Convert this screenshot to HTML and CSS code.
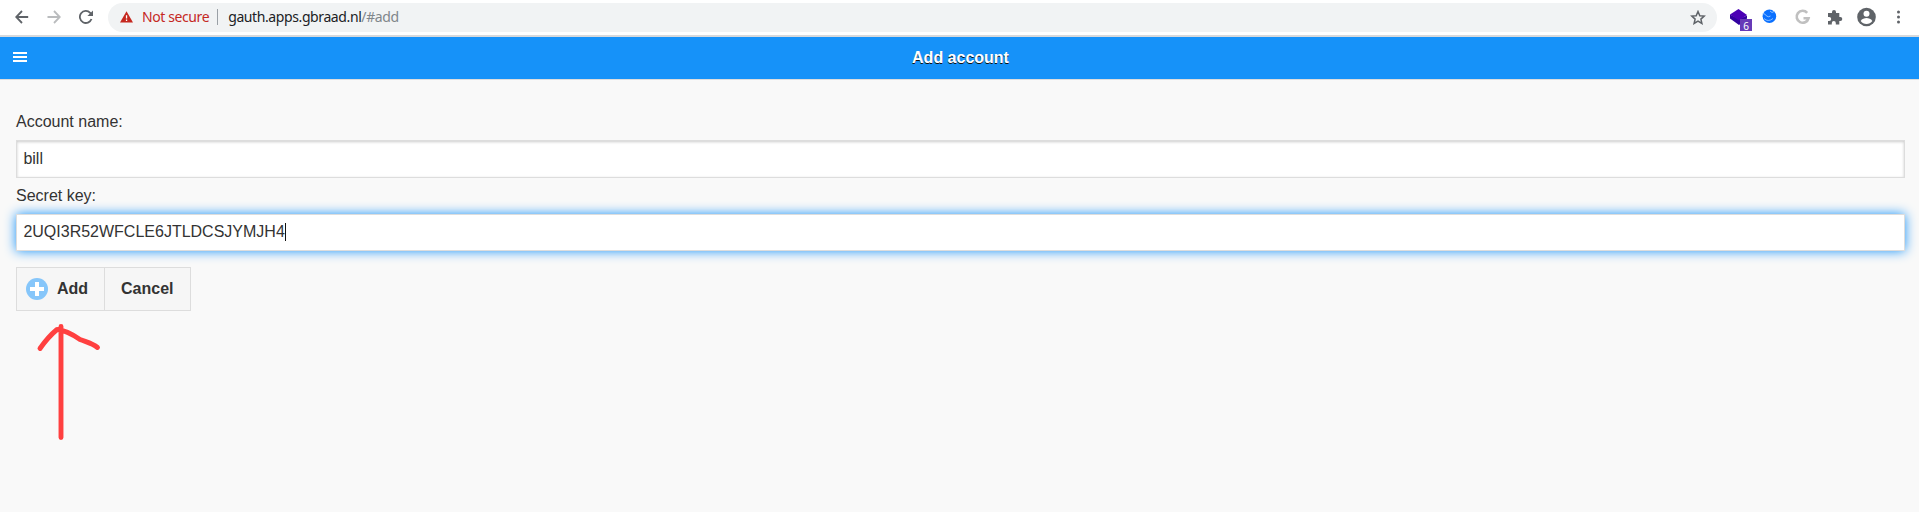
FILE: index.html
```html
<!DOCTYPE html>
<html lang="en">
<head>
<meta charset="utf-8">
<title>Add account</title>
<link rel="stylesheet" href="styles.css">
</head>
<body>
<div class="toolbar">
  <div class="nav">
    <svg width="14" height="14" viewBox="0 0 14 14" class="stroke"><path d="M13.2 7H1.3M7 1 1.2 7 7 13"/></svg>
    <svg width="14" height="14" viewBox="0 0 14 14" class="stroke dim"><path d="M.5 7h12M7 1l5.800 6L7 13"/></svg>
    <svg width="14" height="14" viewBox="0 0 14 14" class="stroke"><path d="M12.500 9A6 6 0 1 1 11.200 2.800l1.300 1.400"/><path class="solid" d="M14 .4V6H8.400z"/></svg>
  </div>
  <div class="omnibox">
    <svg class="warn" width="13" height="12" viewBox="0 0 13 12"><path fill="#c5281f" d="M6.500.3 13 11.500H0z"/><path fill="#fff" d="M5.900 4.200h1.300v3.400H5.900zM5.900 8.600h1.300v1.300H5.900z"/></svg>
    <span class="insecure">Not secure</span>
    <span class="rule"></span>
    <span class="url">gauth.apps.gbraad.nl<span class="path">/#add</span></span>
    <svg class="star" width="16" height="15" viewBox="0 0 16 15"><path d="M8 1.500 9.800 5.700l4.400.4-3.300 3 1 4.400L8 11.200l-3.900 2.300 1-4.400-3.300-3 4.400-.4z"/></svg>
  </div>
  <svg class="extensions" width="202" height="35" viewBox="1717 0 202 35">
    <path fill="#3202a0" d="M1730 14.500 1739 19 1747 15.500V18.500L1739 25 1730 18.500z"/>
    <path fill="#4b00b5" d="M1738.500 9 1747 15 1739 20.500 1730 14.500z"/>
    <path fill="#673ab7" d="M1740 19h12v12h-12z"/>
    <text class="badge" x="1743.200" y="30">6</text>
    <circle cx="1769.400" cy="16.300" r="6.800" fill="#0a70ff"/>
    <path class="swirl" d="M1762.500 13.500q3 0 4 2.500q2 1.500 4 0M1770 11l2 1.500 2-1M1764 18.500q4 4 9 0"/>
    <path class="google" d="M1807.200 12.800A6 6 0 1 0 1808.500 18.300H1803.500"/>
    <path fill="#5f6368" d="M1828 13h4v-1a2 2 0 0 1 4 0v1h3.300v4h1a2 2 0 0 1 0 4h-1v3.500h-3.500V23a2 2 0 0 0-4 0v1.500H1828V21h1.200a2 2 0 0 0 0-4H1828z"/>
    <circle cx="1866.500" cy="17" r="9.300" fill="#5f6368"/>
    <circle cx="1866.500" cy="13.800" r="3" fill="#fff"/>
    <path fill="#fff" d="M1860.700 21c1-2.300 4-3 5.800-3s4.800.700 5.800 3c-1.200 1.800-3.500 3-5.800 3s-4.600-1.200-5.800-3z"/>
    <g fill="#5f6368"><circle cx="1898.500" cy="12" r="1.500"/><circle cx="1898.500" cy="17" r="1.500"/><circle cx="1898.500" cy="22" r="1.500"/></g>
  </svg>
</div>
<header class="header">
  <svg class="menu" width="14" height="10" viewBox="0 0 14 10"><path fill="#fff" d="M0 0h14v2H0zM0 4h14v2H0zM0 8h14v2H0z"/></svg>
  <h1>Add account</h1>
</header>
<main class="content">
  <label class="label">Account name:</label>
  <div class="field">bill</div>
  <label class="label second">Secret key:</label>
  <div class="field focused">2UQI3R52WFCLE6JTLDCSJYMJH4<span class="caret"></span></div>
  <div class="buttons">
    <div class="button add">
      <svg width="22" height="22" viewBox="0 0 22 22"><circle cx="11" cy="11" r="11" fill="#86c6fa"/><path fill="#fff" d="M9 4h4v5h5v4h-5v5H9v-5H4V9h5z"/></svg>
      <span>Add</span>
    </div>
    <div class="button cancel">Cancel</div>
  </div>
</main>
<svg class="arrow" width="70" height="124" viewBox="34 320 70 124"><path d="M61 326.500V437.500M40 348.500Q48 337 57 329.500C64 330 72 334 80 339.500C86 342 92 343 97.500 347.500"/></svg>
</body>
</html>
```
FILE: styles.css
```css
* { box-sizing: border-box; }
body {
  margin: 0;
  height: 512px;
  overflow: hidden;
  background: #f9f9f9;
  color: #333;
  font: 16px/20px "Liberation Sans", Arial, sans-serif;
}
svg { display: block; flex: none; }
.toolbar {
  display: flex;
  height: 37px;
  background: #fff;
  border-bottom: 2px solid #d7d9dc;
}
.nav {
  display: flex;
  gap: 18px;
  width: 108px;
  padding: 10px 0 0 15px;
}
.stroke { fill: none; stroke: #5f6368; stroke-width: 1.8; }
.dim { stroke: #babcbe; }
.solid { fill: #5f6368; stroke: none; }
.omnibox {
  display: flex;
  align-items: center;
  flex: 1;
  height: 29px;
  margin-top: 3px;
  padding: 0 11px 0 12px;
  border-radius: 15px;
  background: #f1f3f4;
  font: 14px/20px "Noto Sans", sans-serif;
  letter-spacing: -.4px;
}
.warn { margin-top: -1px; }
.omnibox span { position: relative; top: -.5px; }
.insecure { margin-left: 9px; color: #c5281f; }
.rule { width: 1px; height: 16px; margin: 0 10px 0 8px; background: #9aa0a6; }
.url { color: #202124; }
.omnibox .path { top: 0; color: #80868b; }
.star { margin-left: auto; fill: none; stroke: #5f6368; stroke-width: 1.5; }
.badge { fill: #fff; font: 10px "Noto Sans", sans-serif; }
.swirl { fill: none; stroke: #a9d2ff; stroke-width: .8; }
.google { fill: none; stroke: #c0c0c0; stroke-width: 2.6; }
.header {
  display: grid;
  grid-template-columns: 102px 1fr 100px;
  align-items: center;
  height: 43px;
  background: #1692f9;
  border-bottom: 1px solid #ddd;
}
.menu { margin: -2px 0 0 13px; }
.header h1 {
  margin: 0;
  color: #fff;
  font-size: 16px;
  line-height: 20px;
  text-align: center;
  text-shadow: 0 1px 0 #111;
}
.content { padding: 32px 14px 0 16px; }
.label { display: block; margin-bottom: 8px; }
.second { margin-top: 8px; }
.field {
  display: flex;
  align-items: center;
  height: 38px;
  padding: 0 6.4px;
  border: 1px solid #ddd;
  background: #fff;
  box-shadow: inset 0 1px 3px rgba(0, 0, 0, .2);
}
.focused { height: 37px; padding-bottom: 1px; box-shadow: 0 0 12px #1692f9; }
.caret { width: 1px; height: 18px; background: #111; }
.buttons {
  display: flex;
  width: 175px;
  height: 44px;
  margin-top: 16px;
  border: 1px solid #ddd;
  background: #f6f6f6;
  font-weight: bold;
}
.button { display: flex; align-items: center; }
.add { width: 88px; gap: 9px; padding-left: 9px; border-right: 1px solid #ddd; }
.cancel { padding-left: 16px; }
.arrow {
  position: absolute;
  left: 34px;
  top: 320px;
  fill: none;
  stroke: #ff4040;
  stroke-width: 4.9;
  stroke-linecap: round;
  stroke-linejoin: round;
}
```
